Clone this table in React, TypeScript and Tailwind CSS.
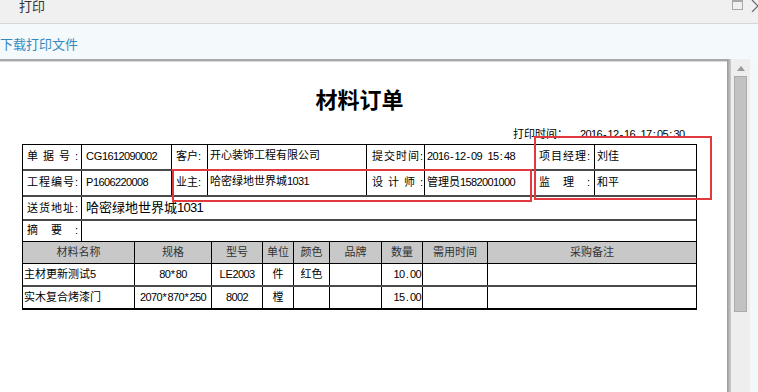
import React from "react";

function T({ s, big }: { s: string; big?: boolean }) {
  const chars = Array.from(s);
  return (
    <>
      {chars.map((c, i) =>
        /[0-9\-:.* ]/.test(c) ? (
          <span
            key={i}
            className={
              big
                ? "inline-block w-[6.5px] text-center whitespace-pre"
                : "inline-block w-[5.5px] text-center whitespace-pre"
            }
          >
            {c}
          </span>
        ) : /[A-Za-z]/.test(c) ? (
          <span key={i} className="tracking-[-0.3px]">
            {c}
          </span>
        ) : (
          <span key={i}>{c}</span>
        )
      )}
    </>
  );
}

function L({ c }: { c: string[] }) {
  return (
    <span className="flex w-[51px] justify-between">
      {c.map((x, i) => (
        <span key={i}>{x}</span>
      ))}
    </span>
  );
}

export default function App() {
  return (
    <div className="relative w-[758px] h-[392px] overflow-hidden flex flex-col bg-[#f4f9fb] font-['Liberation_Sans','Noto_Sans_CJK_SC',sans-serif]">
      {/* title bar */}
      <div className="relative h-[24px] shrink-0 bg-[#f0f0f0] border-b border-[#d6d6d6]">
        <span className="absolute left-[19px] top-[0px] text-[13px] leading-[13px] text-[#333]">打印</span>
        <div className="absolute left-[732px] top-[0px] w-[11px] h-[10px] border border-[#a8a8a8] border-t-[2px]" />
        <svg className="absolute left-[751px] top-[0px]" width="14" height="12" viewBox="0 0 14 12">
          <path d="M1 0 L7 6 L1 12" fill="none" stroke="#666" strokeWidth="1.2" />
        </svg>
      </div>
      {/* download bar */}
      <div className="h-[35px] shrink-0 flex items-center">
        <span className="text-[13px] text-[#3689c0] leading-none mt-[6px]">下载打印文件</span>
      </div>
      {/* content */}
      <div className="flex flex-1 min-h-0">
        <div className="w-[727px] shrink-0 bg-white border-t-2 border-[#a8a8a8]">
          <div className="h-[1px] bg-[#d8d8d8]" />
          <div className="pl-[22px] pt-[24px]">
            <div className="w-[675px]">
              <div className="h-[30px] flex items-center justify-center text-[22px] font-bold text-black leading-none">
                材料订单
              </div>
              <div className="h-[16px] mt-[10px] flex items-center text-[11px] text-black pl-[491px]">
                <span>打印时间：</span>
                <span className="ml-[12px]">
                  <T s="2016-12-16 17:05:30" />
                </span>
              </div>
              {/* info table */}
              <div className="mt-[2px] border-x border-t border-black text-[11px] text-black">
                <div className="flex h-[26px] border-b-2 border-[#4a4a4a]">
                  <div className="w-[59px] border-r border-black flex items-center pl-[4px] pb-[1px]">
                    <L c={["单", "据", "号", ":"]} />
                  </div>
                  <div className="w-[90px] border-r border-black flex items-center pl-[4px] pb-[1px]">
                    <T s="CG1612090002" />
                  </div>
                  <div className="w-[36px] border-r border-black flex items-center pl-[4px] pb-[1px]">客户:</div>
                  <div className="w-[159px] border-r border-black flex items-start pl-[2px] pt-[2px]">开心装饰工程有限公司</div>
                  <div className="w-[58px] border-r border-black flex items-center pl-[5px] pb-[1px]">
                    <L c={["提", "交", "时", "间", ":"]} />
                  </div>
                  <div className="w-[111px] border-r border-black flex items-center pl-[2px] pb-[1px]">
                    <T s="2016-12-09 15:48" />
                  </div>
                  <div className="w-[59px] border-r border-black flex items-center pl-[3px] pb-[1px]">
                    <L c={["项", "目", "经", "理", ":"]} />
                  </div>
                  <div className="flex-1 flex items-center pl-[2px] pb-[1px]">刘佳</div>
                </div>
                <div className="flex h-[26px] border-b-2 border-[#4a4a4a]">
                  <div className="w-[59px] border-r border-black flex items-center pl-[4px] pb-[1px]">
                    <L c={["工", "程", "编", "号", ":"]} />
                  </div>
                  <div className="w-[90px] border-r border-black flex items-center pl-[4px] pb-[1px]">
                    <T s="P1606220008" />
                  </div>
                  <div className="w-[36px] border-r border-black flex items-center pl-[4px] pb-[1px]">业主:</div>
                  <div className="w-[159px] border-r border-black flex items-start pl-[2px] pt-[2px]">
                    <T s="哈密绿地世界城1031" />
                  </div>
                  <div className="w-[58px] border-r border-black flex items-center pl-[5px] pb-[1px]">
                    <L c={["设", "计", "师", ":"]} />
                  </div>
                  <div className="w-[111px] border-r border-black flex items-center pl-[2px] pb-[1px]">
                    <T s="管理员1582001000" />
                  </div>
                  <div className="w-[59px] border-r border-black flex items-center pl-[3px] pb-[1px]">
                    <L c={["监", "理", ":"]} />
                  </div>
                  <div className="flex-1 flex items-center pl-[2px] pb-[1px]">和平</div>
                </div>
                <div className="flex h-[24px] border-b-2 border-[#4a4a4a]">
                  <div className="w-[59px] border-r border-black flex items-center pl-[4px]">
                    <L c={["送", "货", "地", "址", ":"]} />
                  </div>
                  <div className="flex-1 flex items-center pl-[4px] text-[13px]">
                    <T s="哈密绿地世界城1031" big />
                  </div>
                </div>
                <div className="flex h-[21px] border-b border-black">
                  <div className="w-[59px] border-r border-black flex items-center pl-[4px] pb-[1px]">
                    <L c={["摘", "要", ":"]} />
                  </div>
                  <div className="flex-1" />
                </div>
                {/* items header */}
                <div className="flex h-[22px] bg-[#c8c8c8] border-b border-black text-[#333]">
                  <div className="w-[112px] border-r border-black flex items-center justify-center">材料名称</div>
                  <div className="w-[77px] border-r border-black flex items-center justify-center">规格</div>
                  <div className="w-[51px] border-r border-black flex items-center justify-center">型号</div>
                  <div className="w-[31px] border-r border-black flex items-center justify-center">单位</div>
                  <div className="w-[36px] border-r border-black flex items-center justify-center">颜色</div>
                  <div className="w-[52px] border-r border-black flex items-center justify-center">品牌</div>
                  <div className="w-[41px] border-r border-black flex items-center justify-center">数量</div>
                  <div className="w-[65px] border-r border-black flex items-center justify-center">需用时间</div>
                  <div className="flex-1 flex items-center justify-center">采购备注</div>
                </div>
                <div className="flex h-[23px] border-b-2 border-[#4a4a4a]">
                  <div className="w-[112px] border-r border-black flex items-center pl-[1px]">
                    <T s="主材更新测试5" />
                  </div>
                  <div className="w-[77px] border-r border-black flex items-center justify-center">
                    <T s="80*80" />
                  </div>
                  <div className="w-[51px] border-r border-black flex items-center justify-center">
                    <T s="LE2003" />
                  </div>
                  <div className="w-[31px] border-r border-black flex items-center justify-center">件</div>
                  <div className="w-[36px] border-r border-black flex items-center justify-center">红色</div>
                  <div className="w-[52px] border-r border-black" />
                  <div className="w-[41px] border-r border-black flex items-center justify-end pr-[1px]">
                    <T s="10.00" />
                  </div>
                  <div className="w-[65px] border-r border-black" />
                  <div className="flex-1" />
                </div>
                <div className="flex h-[23px] border-b-2 border-black">
                  <div className="w-[112px] border-r border-black flex items-center pl-[1px]">实木复合烤漆门</div>
                  <div className="w-[77px] border-r border-black flex items-center justify-center">
                    <T s="2070*870*250" />
                  </div>
                  <div className="w-[51px] border-r border-black flex items-center justify-center">
                    <T s="8002" />
                  </div>
                  <div className="w-[31px] border-r border-black flex items-center justify-center">樘</div>
                  <div className="w-[36px] border-r border-black" />
                  <div className="w-[52px] border-r border-black" />
                  <div className="w-[41px] border-r border-black flex items-center justify-end pr-[1px]">
                    <T s="15.00" />
                  </div>
                  <div className="w-[65px] border-r border-black" />
                  <div className="flex-1" />
                </div>
              </div>
            </div>
          </div>
        </div>
        <div className="w-[4px] shrink-0 bg-[linear-gradient(to_right,#999999,#cfcfcf)]" />
        <div className="w-[19px] shrink-0 bg-[#eeeeee] flex flex-col items-center pt-[7px]">
          <svg width="8" height="5" viewBox="0 0 8 5">
            <path d="M0 5 L4 0 L8 5 Z" fill="#9a9a9a" />
          </svg>
          <div className="mt-[5px] w-[13px] h-[236px] bg-[#c2c2c2] border border-[#ababab]" />
        </div>
        <div className="flex-1 bg-[#f2f9f8]" />
      </div>
      {/* red highlight boxes */}
      <div className="absolute left-[172px] top-[169px] w-[360px] h-[33px] border-2 border-[#e2393e]" />
      <div className="absolute left-[534px] top-[136px] w-[178px] h-[64px] border-2 border-[#e2393e]" />
    </div>
  );
}
